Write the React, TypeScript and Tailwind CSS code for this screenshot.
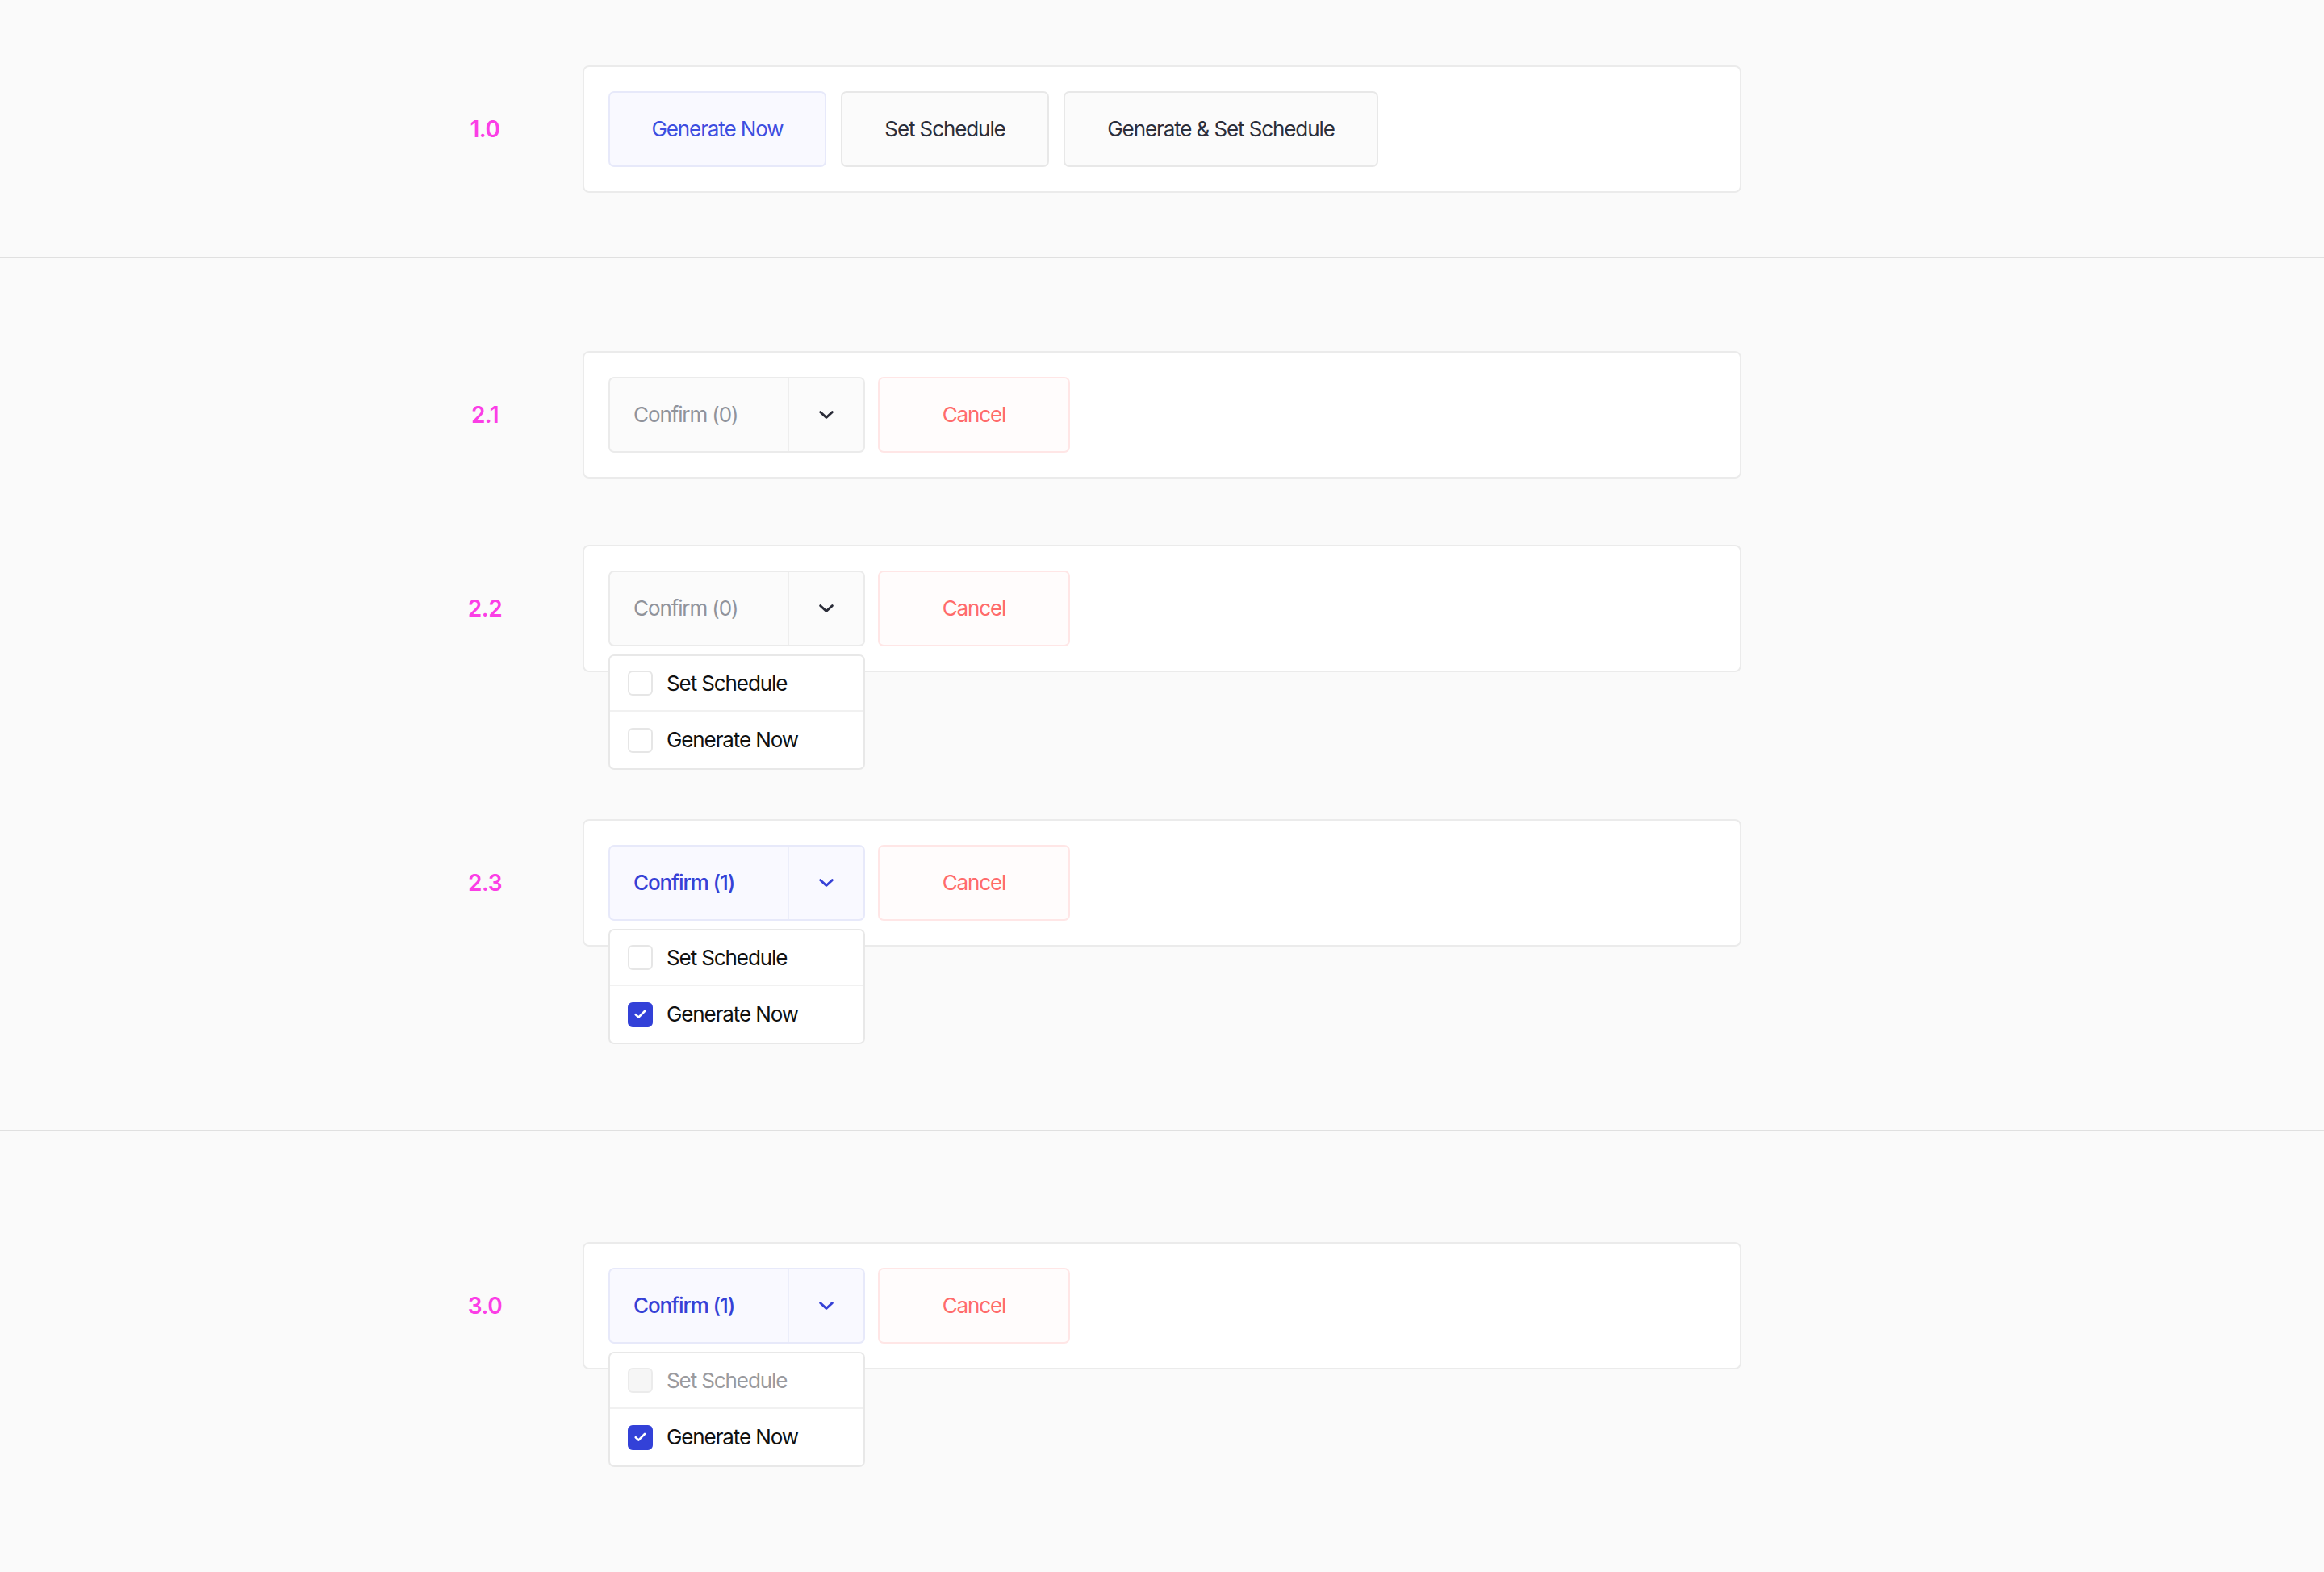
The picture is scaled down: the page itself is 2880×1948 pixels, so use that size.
import React from "react";

function Chevron({ color }: { color: string }) {
  return (
    <svg width="18" height="10" viewBox="0 0 18 10" fill="none">
      <path d="M1.6 1.6 L9 8.4 L16.4 1.6" stroke={color} strokeWidth="2.8" strokeLinecap="round" strokeLinejoin="round" />
    </svg>
  );
}

function Check() {
  return (
    <svg width="15" height="12" viewBox="0 0 15 12" fill="none">
      <path d="M1.8 6.2 L5.4 9.6 L13 2" stroke="#ffffff" strokeWidth="2.6" strokeLinecap="round" strokeLinejoin="round" />
    </svg>
  );
}

function Row({ label, children, className = "" }: { label: string; children: React.ReactNode; className?: string }) {
  return (
    <div className={"grid grid-cols-[1fr_1436px_1fr] " + className}>
      <div className="self-center justify-self-end w-[242px] text-center text-[28px] font-semibold leading-none text-[#fb3ee6] tracking-[-0.5px]">
        {label}
      </div>
      <div className="relative h-[158px] rounded-[8px] border-2 border-[#ebebeb] bg-white p-[30px] flex gap-[16px]">
        {children}
      </div>
      <div />
    </div>
  );
}

function Box({ checked, disabled }: { checked?: boolean; disabled?: boolean }) {
  if (checked) {
    return (
      <div className="w-[31px] h-[31px] rounded-[6px] bg-[#3341d8] flex items-center justify-center shrink-0">
        <Check />
      </div>
    );
  }
  return (
    <div
      className={
        "w-[31px] h-[31px] rounded-[6px] border-2 shrink-0 " +
        (disabled ? "border-[#ebebeb] bg-[#f6f6f6]" : "border-[#e6e6e6] bg-white")
      }
    />
  );
}

function Split({ count, open, disabledFirst }: { count: number; open?: boolean; disabledFirst?: boolean }) {
  const active = count > 0;
  return (
    <div className="relative w-[318px] h-[94px] shrink-0">
      <div
        className={
          "flex h-full rounded-[7px] border-2 " +
          (active ? "border-[#e7e9fa] bg-[#f9f9ff]" : "border-[#ebebeb] bg-[#fbfbfb]")
        }
      >
        <div
          className={
            "w-[222px] flex items-center pl-[29px] text-[26px] leading-none tracking-[-1.1px] border-r-2 " +
            (active ? "text-[#3641d6] font-medium border-[#eceefa]" : "text-[#90939b] border-[#eeeeee]")
          }
        >
          Confirm ({count})
        </div>
        <div className="flex-1 flex items-center justify-center">
          <Chevron color={active ? "#3641d6" : "#2a2c38"} />
        </div>
      </div>
      {open && (
        <div className="absolute left-0 top-[104px] w-[318px] rounded-[7px] border-2 border-[#e8e8e8] bg-white">
          <div className="h-[69px] flex items-center pl-[22px] gap-[17px] border-b-2 border-[#f1f1f1]">
            <Box disabled={disabledFirst} />
            <span className={"text-[26px] leading-none tracking-[-1.1px] " + (disabledFirst ? "text-[#9a9a9e]" : "text-[#111111]")}>
              Set Schedule
            </span>
          </div>
          <div className="h-[70px] flex items-center pl-[22px] gap-[17px]">
            <Box checked={active} />
            <span className="text-[26px] leading-none tracking-[-1.1px] text-[#111111]">Generate Now</span>
          </div>
        </div>
      )}
    </div>
  );
}

function Cancel() {
  return (
    <div className="w-[238px] h-[94px] shrink-0 rounded-[7px] border-2 border-[#ffe6e6] bg-[#fffcfc] flex items-center justify-center text-[26px] leading-none tracking-[-1.1px] text-[#ff6b6b]">
      Cancel
    </div>
  );
}

export default function App() {
  return (
    <div className="min-h-screen bg-[#fafafa] font-['Inter','Noto_Sans',sans-serif] antialiased">
      <section className="pt-[81px] pb-[79px] border-b-2 border-[#e0e0e0]">
        <Row label="1.0">
          <div className="w-[270px] h-[94px] rounded-[7px] border-2 border-[#e7e9fa] bg-[#f9f9ff] flex items-center justify-center text-[26px] leading-none tracking-[-1.1px] text-[#3d4ee0]">
            Generate Now
          </div>
          <div className="w-[258px] h-[94px] ml-[2px] rounded-[7px] border-2 border-[#e8e8e8] bg-[#fbfbfb] flex items-center justify-center text-[26px] leading-none tracking-[-1.1px] text-[#2b2e3a]">
            Set Schedule
          </div>
          <div className="w-[390px] h-[94px] ml-[2px] rounded-[7px] border-2 border-[#e8e8e8] bg-[#fbfbfb] flex items-center justify-center text-[26px] leading-none tracking-[-1.1px] text-[#2b2e3a]">
            Generate &amp; Set Schedule
          </div>
        </Row>
      </section>

      <section className="pt-[115px] pb-[227px] border-b-2 border-[#e0e0e0]">
        <Row label="2.1" className="mb-[82px]">
          <Split count={0} />
          <Cancel />
        </Row>
        <Row label="2.2" className="mb-[182px]">
          <Split count={0} open />
          <Cancel />
        </Row>
        <Row label="2.3">
          <Split count={1} open />
          <Cancel />
        </Row>
      </section>

      <section className="pt-[137px]">
        <Row label="3.0">
          <Split count={1} open disabledFirst />
          <Cancel />
        </Row>
      </section>
    </div>
  );
}
